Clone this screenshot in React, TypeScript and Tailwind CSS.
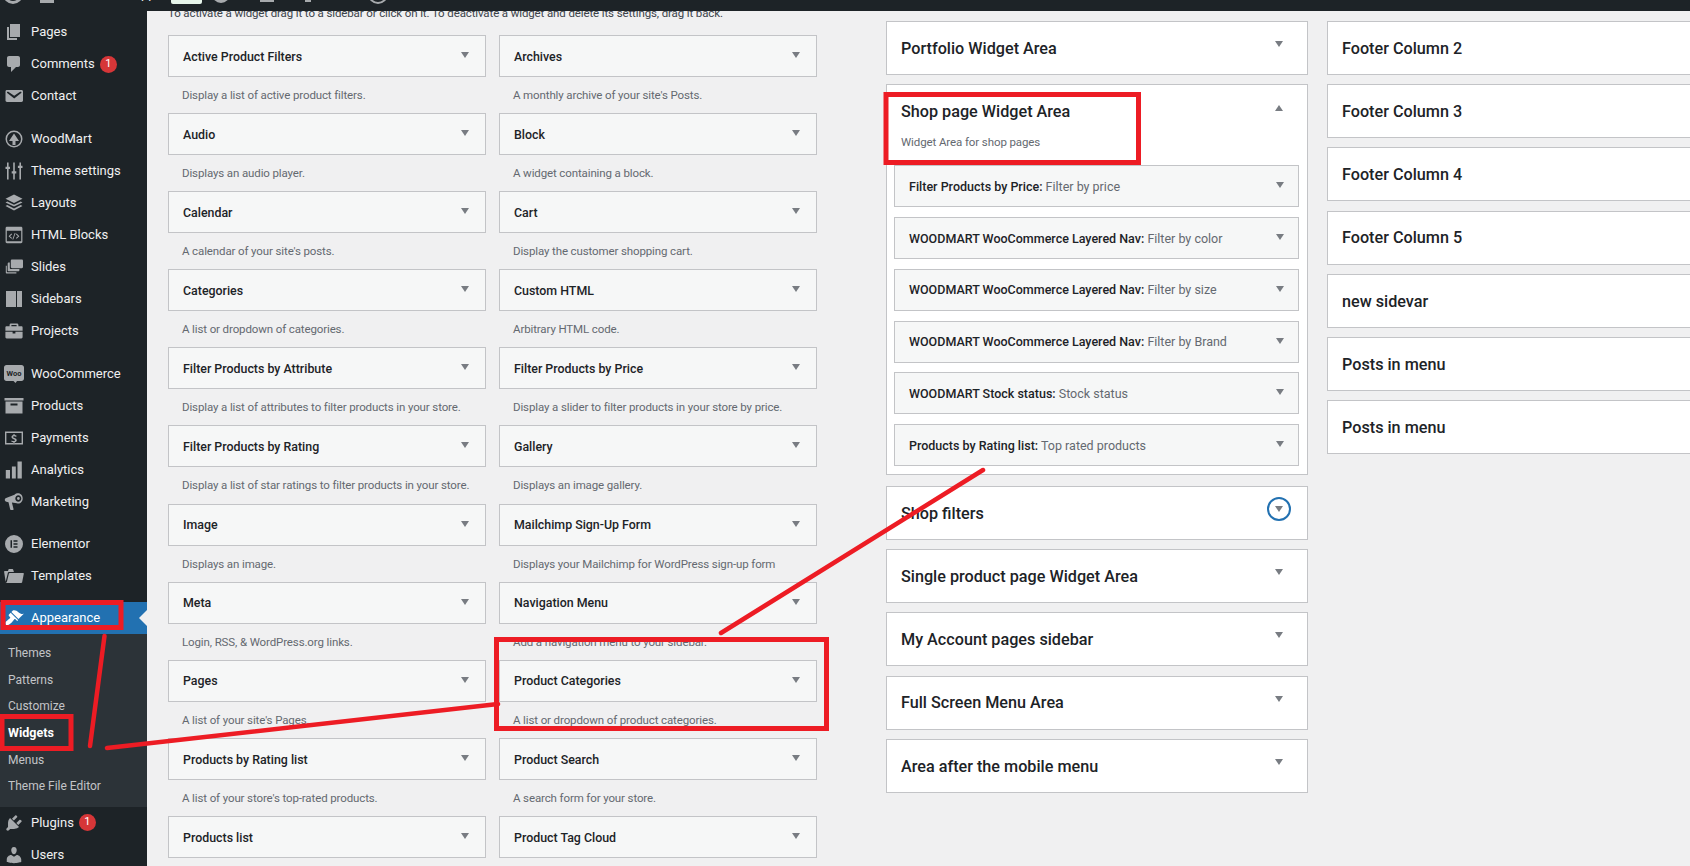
import React from "react";

const G = "#a7aaad";
type IconProps = { name: string; color?: string };
const paths: Record<string, React.ReactNode> = {
  pages: <path d="M6 15V2h10v13H6zm-1 1h8v2H3V5h2v11z" />,
  comments: <path d="M5 2h9c1.1 0 2 .9 2 2v7c0 1.1-.9 2-2 2h-2l-5 5v-5H5c-1.1 0-2-.9-2-2V4c0-1.1.9-2 2-2z" />,
  contact: <path fillRule="evenodd" d="M3 4h14.5c.8 0 1.5.6 1.5 1.4v9.2c0 .8-.7 1.4-1.5 1.4H3c-.8 0-1.5-.6-1.5-1.4V5.4C1.500 4.600 2.200 4 3 4zm7.200 8.600l7-5.600c.3-.3.4-.7.1-1-.3-.4-.8-.4-1.200-.2l-5.900 3.900-5.900-3.900c-.4-.2-.9-.2-1.200.2-.3.3-.2.7.1 1z" />,
  woodmart: (
    <>
      <path fillRule="evenodd" d="M10 1.500a8.500 8.500 0 1 1 0 17 8.500 8.500 0 0 1 0-17zm0 1.500a7 7 0 1 0 0 14 7 7 0 0 0 0-14z" />
      <path d="M10 4.500l5 7.500h-3.500v4h-3v-4H5z" />
    </>
  ),
  sliders: <path d="M3 1.500h1.600v4.200H6v2.400H4.600v10.400H3V8.100H1.500V5.700H3zM9.200 1.500h1.600v8.700h1.500v2.400h-1.500v5.900H9.200v-5.900H7.700v-2.400h1.500zM15.400 1.500H17v3.200h1.500v2.400H17v11.400h-1.600V7.100h-1.500V4.700h1.500z" />,
  layers: (
    <>
      <path d="M10 1.500l8.500 4.300L10 10 1.500 5.800z" />
      <path d="M3.300 8.400L10 11.700l6.700-3.300 1.800 1L10 13.600 1.500 9.400z" />
      <path d="M3.300 12.100L10 15.400l6.700-3.300 1.800 1L10 17.400l-8.500-4.300z" />
    </>
  ),
  html: (
    <path fillRule="evenodd" d="M3 1.800h14c.8 0 1.400.6 1.400 1.400v13.600c0 .8-.6 1.400-1.400 1.400H3c-.8 0-1.400-.6-1.400-1.400V3.200c0-.8.600-1.400 1.400-1.400zM2.800 5.800v10.400h14.400V5.800zM7.400 8.600l.7.700L6 11.200l2.100 1.900-.7.700L4.600 11.200zm5.200 0l2.800 2.600-2.800 2.600-.7-.7 2.100-1.900-2.100-1.900zM10.700 8h.9l-2.300 6.400h-.9z" />
  ),
  slides: (
    <path d="M8 2.500h9.800c.6 0 1.200.5 1.200 1.200V10c0 .6-.5 1.200-1.200 1.200H8c-.6 0-1.200-.5-1.200-1.200V3.700c0-.7.600-1.200 1.200-1.200zM4.800 5.600h1v5.400c0 .6.500 1.100 1.100 1.100h8.500v1.100c0 .6-.5 1.100-1.100 1.100H4.800c-.6 0-1.100-.5-1.100-1.100V6.700c0-.6.500-1.100 1.100-1.100zM1.800 8.800h1v5.400c0 .6.500 1.100 1.100 1.100h8.500v1.200H2.900c-.6 0-1.100-.5-1.100-1.100z" />
  ),
  sidebars: (
    <>
      <path d="M2 2h10v16H2z" />
      <path d="M13 2h5v16h-5z" />
    </>
  ),
  projects: (
    <path d="M7 2.500h6c.8 0 1.400.6 1.400 1.400v1.300h3c.8 0 1.200.5 1.200 1.200v3.400H1.400V6.400c0-.7.400-1.200 1.200-1.200h3V3.900c0-.8.600-1.400 1.400-1.400zm.4 1.500v1.200h5.200V4zM1.400 10.800h7.200v1.700h2.800v-1.700h7.200v5.300c0 .8-.5 1.300-1.200 1.300H2.600c-.7 0-1.200-.5-1.200-1.300z" />
  ),
  products: <path d="M0.500 2h19v2.500h-19zM1.500 5.500h17v12h-17zM6.500 7.500v2h7v-2z" fillRule="evenodd" />,
  payments: (
    <path fillRule="evenodd" d="M1 3.500h18v13H1zm1.400 1.400v10.200h15.200V4.900zM9.400 6h1.200v1c.9.100 1.600.4 2 .7l-.5 1.200c-.5-.3-1.100-.6-1.900-.6-.8 0-1.100.3-1.100.7 0 .4.400.7 1.400 1 1.500.5 2.200 1.100 2.200 2.200 0 1-.7 1.800-2.100 2v1.100H9.400v-1c-.9 0-1.700-.3-2.200-.7l.5-1.200c.6.400 1.300.7 2.100.7.700 0 1.200-.3 1.200-.8 0-.4-.4-.8-1.300-1.100-1.400-.5-2.200-1.100-2.200-2.100 0-1 .7-1.800 2-2z" />
  ),
  analytics: <path d="M17.800 1.500v17h-4.300v-17zM11.800 6.500v12H7.900v-12zM6 10v8.500H1.800V10z" />,
  marketing: (
    <path fillRule="evenodd" d="M14.200 1.300c2.600 0 4.500 2.400 4.500 5.200s-1.900 5.100-4.500 5.100c-.5 0-1-.1-1.400-.300l-4.900-.8 1.700 6.700c.1.400-.2.800-.6.800H6.900c-.3 0-.6-.2-.7-.5l-1.700-7.300-2.100-.4C1.500 9.600.8 8.800.8 7.800c0-.8.500-1.600 1.300-1.900L10.500 2.700c1-.9 2.300-1.400 3.700-1.400zm.1 2c-1.700 0-3 1.500-3 3.200s1.300 3.200 3 3.200 3-1.500 3-3.200-1.300-3.200-3-3.200zm.1 1.800a1.400 1.400 0 1 1 0 2.800 1.400 1.400 0 0 1 0-2.800z" />
  ),
  elementor: (
    <path fillRule="evenodd" d="M10 1a9 9 0 1 1 0 18 9 9 0 0 1 0-18zM6.500 6.200v7.600H8V6.200zm3 0v1.500h4V6.200zm0 3.050v1.500h4v-1.500zm0 3.050v1.500h4v-1.500z" />
  ),
  templates: (
    <path d="M4 5H.78c-.37 0-.74.32-.69.84l1.560 9.990S3.500 8.470 3.860 6.700c.11-.53.610-.7.980-.7H10s-.7-2.080-.77-2.310C9.110 3.250 8.890 3 8.450 3H5.140c-.36 0-.7.230-.8.640C4.250 4.040 4 5 4 5zm-1.330 11.250c-.31.470-.76.750-1.260.750h15.730c.54 0 .92-.31 1.030-.83.440-2.190 1.680-8.440 1.680-8.440.07-.5-.3-.73-.62-.73H5.590c-.32 0-.63.190-.69.500 0 0-1.590 6.700-1.720 7.330-.07.37-.22.990-.51 1.420z" />
  ),
  appearance: (
    <path d="M14.480 11.060L7.410 3.990l1.500-1.500c.5-.56 2.300-.47 3.510.32 1.210.8 1.430 1.280 2.910 2.100 1.180.64 2.450 1.260 4.450.85zm-.71.710L6.700 4.700 4.930 6.470c-.39.390-.39 1.020 0 1.410l1.060 1.060c.39.390.39 1.030 0 1.420-.6.600-1.430 1.110-2.210 1.690-.35.260-.7.530-1.010.84C1.430 13.250 1 15.400 2 17c.93 1.500 4.750-1.490 5.670-2.400.3-.31.580-.66.840-1.010.57-.78 1.080-1.610 1.690-2.210.39-.39 1.020-.39 1.410 0l1.060 1.060c.39.390 1.020.390 1.410 0z" />
  ),
  plugins: (
    <path d="M13.110 4.360L9.870 7.600 8 5.730l3.240-3.240c.35-.34 1.050-.2 1.560.32.52.51.66 1.210.31 1.550zm-8 1.770l.91-1.120 9.010 9.010-1.190.84c-.71.710-2.630 1.160-3.820 1.160H6.140L4.900 17.260c-.59.590-1.540.59-2.120 0-.59-.58-.59-1.530 0-2.120l1.240-1.240v-3.880c0-1.130.4-3.190 1.090-3.890zm7.260 3.970l3.240-3.240c.34-.35 1.040-.21 1.550.31.520.51.660 1.210.31 1.550l-3.240 3.250z" />
  ),
  users: (
    <path d="M10 9.250c-2.270 0-2.730-3.440-2.730-3.440C7 4.020 7.820 2 9.970 2c2.160 0 2.980 2.020 2.710 3.810 0 0-.41 3.440-2.680 3.440zm0 2.570L12.720 10c2.390 0 4.520 2.330 4.520 4.530v2.490s-3.650 1.130-7.240 1.130c-3.650 0-7.240-1.130-7.240-1.130v-2.490c0-2.250 1.940-4.480 4.470-4.480z" />
  ),
  woo: (
    <>
      <path d="M2.500 1h15C18.900 1 20 2.100 20 3.500v11c0 1.400-1.100 2.500-2.500 2.500H13l-1.500 2-2-2h-7C1.100 17 0 15.900 0 14.500v-11C0 2.100 1.100 1 2.500 1z" />
      <text x="10" y="11.500" textAnchor="middle" fontSize="7.500" fontWeight="700" fill="#1d2327" fontFamily="Roboto, sans-serif">Woo</text>
    </>
  ),
};

function Icon({ name, color = G }: IconProps) {
  return (
    <svg viewBox="0 0 20 20" fill={color} className="w-[20px] h-[20px] shrink-0">
      {paths[name]}
    </svg>
  );
}

function NavItem({ icon, label, badge, mt, mtSm, active }: { icon: string; label: string; badge?: string; mt?: boolean; mtSm?: boolean; active?: boolean }) {
  return (
    <div
      className={`relative h-[32px] flex items-center pl-[4px] text-[13px] ${mt ? "mt-[11px]" : ""} ${mtSm ? "mt-[10px]" : ""} ${active ? "bg-[#2271b1] text-white" : "text-[#f0f0f1]"}`}
    >
      <Icon name={icon} color={active ? "#ffffff" : G} />
      <span className="ml-[7px]">{label}</span>
      {badge && (
        <span className="ml-[5px] w-[17px] h-[17px] rounded-full bg-[#d63638] text-white text-[11px] flex items-center justify-center">
          {badge}
        </span>
      )}
      {active && (
        <span className="absolute right-0 top-[8px] w-0 h-0 border-y-[8px] border-y-transparent border-r-[8px] border-r-[#f0f0f1]" />
      )}
    </div>
  );
}

function Arrow({ up }: { up?: boolean }) {
  return (
    <span
      className={`block w-0 h-0 border-x-[4px] border-x-transparent ${up ? "border-b-[6px] border-b-[#787c82]" : "border-t-[6px] border-t-[#787c82]"}`}
    />
  );
}

function Widget({ title, desc }: { title: string; desc: string }) {
  return (
    <div className="h-[78.1px]">
      <div className="h-[42px] bg-[#f6f7f7] border border-[#c3c4c7] flex items-center justify-between pl-[14px] pr-[16px]">
        <span className="text-[12.400px] font-medium text-[#1d2327] pt-[2px]">{title}</span>
        <span className="-mt-[2px]">
          <Arrow />
        </span>
      </div>
      <p className="text-[11.500px] tracking-[-0.12px] text-[#646970] pl-[14px] mt-[8px] leading-[20px] whitespace-nowrap">{desc}</p>
    </div>
  );
}

function InnerWidget({ title, sub }: { title: string; sub: string }) {
  return (
    <div className="h-[42px] mb-[9.8px] bg-[#f6f7f7] border border-[#c3c4c7] flex items-center justify-between pl-[14px] pr-[14px]">
      <span className="text-[12.500px] pt-[2px] whitespace-nowrap">
        <span className="font-medium text-[#1d2327]">{title}:</span>
        <span className="text-[#646970]"> {sub}</span>
      </span>
      <span className="-mt-[2px]">
        <Arrow />
      </span>
    </div>
  );
}

function Area({ title, focus, arrow = true }: { title: string; focus?: boolean; arrow?: boolean }) {
  return (
    <div className="h-[54px] mb-[9.2px] bg-white border border-[#c3c4c7] flex items-center justify-between pl-[14px] pr-[24px]">
      <span className="text-[16.200px] font-medium text-[#1d2327] pt-[2px]">{title}</span>
      {arrow &&
        (focus ? (
          <span className="w-[24px] h-[24px] -mr-[8px] -mt-[8px] rounded-full border-2 border-[#2271b1] flex items-center justify-center">
            <Arrow />
          </span>
        ) : (
          <span className="-mt-[8px]">
            <Arrow />
          </span>
        ))}
    </div>
  );
}

const widgets: [string, string][] = [
  ["Active Product Filters", "Display a list of active product filters."],
  ["Archives", "A monthly archive of your site's Posts."],
  ["Audio", "Displays an audio player."],
  ["Block", "A widget containing a block."],
  ["Calendar", "A calendar of your site's posts."],
  ["Cart", "Display the customer shopping cart."],
  ["Categories", "A list or dropdown of categories."],
  ["Custom HTML", "Arbitrary HTML code."],
  ["Filter Products by Attribute", "Display a list of attributes to filter products in your store."],
  ["Filter Products by Price", "Display a slider to filter products in your store by price."],
  ["Filter Products by Rating", "Display a list of star ratings to filter products in your store."],
  ["Gallery", "Displays an image gallery."],
  ["Image", "Displays an image."],
  ["Mailchimp Sign-Up Form", "Displays your Mailchimp for WordPress sign-up form"],
  ["Meta", "Login, RSS, & WordPress.org links."],
  ["Navigation Menu", "Add a navigation menu to your sidebar."],
  ["Pages", "A list of your site's Pages."],
  ["Product Categories", "A list or dropdown of product categories."],
  ["Products by Rating list", "A list of your store's top-rated products."],
  ["Product Search", "A search form for your store."],
  ["Products list", "A list of your store's products."],
  ["Product Tag Cloud", "A cloud of your most used product tags."],
];

const inner: [string, string][] = [
  ["Filter Products by Price", "Filter by price"],
  ["WOODMART WooCommerce Layered Nav", "Filter by color"],
  ["WOODMART WooCommerce Layered Nav", "Filter by size"],
  ["WOODMART WooCommerce Layered Nav", "Filter by Brand"],
  ["WOODMART Stock status", "Stock status"],
  ["Products by Rating list", "Top rated products"],
];

const R = "#ed1c24";

export default function App() {
  return (
    <div
      className="relative h-screen overflow-hidden bg-[#f0f0f1] flex flex-col"
      style={{ fontFamily: 'Roboto, sans-serif' }}
    >
      {/* Admin bar, scrolled so that only its lower edge is visible */}
      <div className="relative z-10 h-[11px] shrink-0 bg-[#1d2327] overflow-hidden">
        <div className="h-[22px] -mt-[17px] flex items-center text-[13px] text-[#f0f0f1] whitespace-nowrap">
          <span className="ml-[3px] w-[20px] h-[20px] rounded-full border-[3px] border-[#a7aaad]" />
          <span className="ml-[17px] w-[14px] h-[14px] mt-[3px] bg-[#a7aaad]" />
          <span className="ml-[8px] w-[103px]">WoodMart Support</span>
          <span className="ml-[6px] px-[8px] w-[31px] h-[20px] pt-[2px] text-[11px] bg-[#e6f4ea] text-[#1f7a34] rounded-[2px] font-semibold">Live</span>
          <span className="ml-[10px] w-[18px] h-[18px] rounded-full border-[3px] border-[#a7aaad]" />
          <span className="ml-[5px]">4</span>
          <span className="ml-[18px] w-[14px] h-[16px] bg-[#a7aaad]" />
          <span className="ml-[6px]">4</span>
          <span className="ml-[17px] w-[6px] h-[16px] bg-[#a7aaad]" />
          <span className="ml-[14px]">New</span>
          <span className="ml-[17px] w-[20px] h-[20px] rounded-full border-[2px] border-[#a7aaad]" />
          <span className="ml-[6px]">WoodMart</span>
        </div>
      </div>

      <div className="flex flex-1 min-h-0">
        {/* Admin menu */}
        <aside className="w-[147px] shrink-0 bg-[#1d2327] pt-[5px]">
          <NavItem icon="pages" label="Pages" />
          <NavItem icon="comments" label="Comments" badge="1" />
          <NavItem icon="contact" label="Contact" />
          <NavItem icon="woodmart" label="WoodMart" mt />
          <NavItem icon="sliders" label="Theme settings" />
          <NavItem icon="layers" label="Layouts" />
          <NavItem icon="html" label="HTML Blocks" />
          <NavItem icon="slides" label="Slides" />
          <NavItem icon="sidebars" label="Sidebars" />
          <NavItem icon="projects" label="Projects" />
          <NavItem icon="woo" label="WooCommerce" mt />
          <NavItem icon="products" label="Products" />
          <NavItem icon="payments" label="Payments" />
          <NavItem icon="analytics" label="Analytics" />
          <NavItem icon="marketing" label="Marketing" />
          <NavItem icon="elementor" label="Elementor" mtSm />
          <NavItem icon="templates" label="Templates" />
          <NavItem icon="appearance" label="Appearance" mtSm active />
          <div className="bg-[#2c3338] pt-[6px] pb-[7px] text-[12px] text-[#c3c4c7]">
            {["Themes", "Patterns", "Customize", "Widgets", "Menus", "Theme File Editor"].map((s) => (
              <div
                key={s}
                className={`h-[26.6px] flex items-center pl-[8px] ${s === "Widgets" ? "font-bold text-[12.500px] text-white" : ""}`}
              >
                {s}
              </div>
            ))}
          </div>
          <NavItem icon="plugins" label="Plugins" badge="1" />
          <NavItem icon="users" label="Users" />
        </aside>

        {/* Content */}
        <main className="flex-1 min-w-0 flex pl-[21px] overflow-hidden">
          <section className="w-[650px] shrink-0">
            <p className="-mt-[8px] mb-[12px] text-[11.500px] tracking-[-0.12px] leading-[20px] text-[#3c434a] whitespace-nowrap">
              To activate a widget drag it to a sidebar or click on it. To deactivate a widget and delete its settings, drag it back.
            </p>
            <div className="grid grid-cols-[318px_318px] gap-x-[13px]">
              {widgets.map(([t, d]) => (
                <Widget key={t} title={t} desc={d} />
              ))}
            </div>
          </section>

          <section className="w-[422px] shrink-0 ml-[68px] pt-[10px]">
            <Area title="Portfolio Widget Area" />
            <div className="h-[391px] mb-[10.800px] bg-white border border-[#c3c4c7] pl-[7px] pr-[8px]">
              <div className="h-[80px] pl-[7px] pr-[16px] flex justify-between">
                <div className="pt-[14px]">
                  <div className="text-[16.200px] font-medium text-[#1d2327] leading-[26px]">Shop page Widget Area</div>
                  <div className="text-[11.500px] tracking-[-0.1px] text-[#646970] mt-[7px] leading-[20px]">Widget Area for shop pages</div>
                </div>
                <span className="pt-[20px]">
                  <Arrow up />
                </span>
              </div>
              {inner.map(([t, s]) => (
                <InnerWidget key={s} title={t} sub={s} />
              ))}
            </div>
            <Area title="Shop filters" focus />
            <Area title="Single product page Widget Area" />
            <Area title="My Account pages sidebar" />
            <Area title="Full Screen Menu Area" />
            <Area title="Area after the mobile menu" />
          </section>

          <section className="w-[422px] shrink-0 ml-[19px] pt-[10px]">
            {["Footer Column 2", "Footer Column 3", "Footer Column 4", "Footer Column 5", "new sidevar", "Posts in menu", "Posts in menu"].map((t, i) => (
              <Area key={i} title={t} arrow={false} />
            ))}
          </section>
        </main>
      </div>

      {/* Red hand-drawn annotations over the page */}
      <svg className="absolute inset-0 z-20 pointer-events-none" width="1690" height="866" fill="none" stroke={R}>
        <rect x="3" y="602.500" width="118" height="25" strokeWidth="5" />
        <rect x="2" y="716.500" width="69" height="32" strokeWidth="5" />
        <rect x="886" y="94.500" width="252.500" height="68" strokeWidth="5" />
        <rect x="496.500" y="639.500" width="330" height="89" strokeWidth="5" />
        <path d="M104.500 636L90 746" strokeWidth="4.500" strokeLinecap="round" />
        <path d="M107 748L498 704" strokeWidth="4.500" strokeLinecap="round" />
        <path d="M983 470L721 633" strokeWidth="4.500" strokeLinecap="round" />
      </svg>
    </div>
  );
}
